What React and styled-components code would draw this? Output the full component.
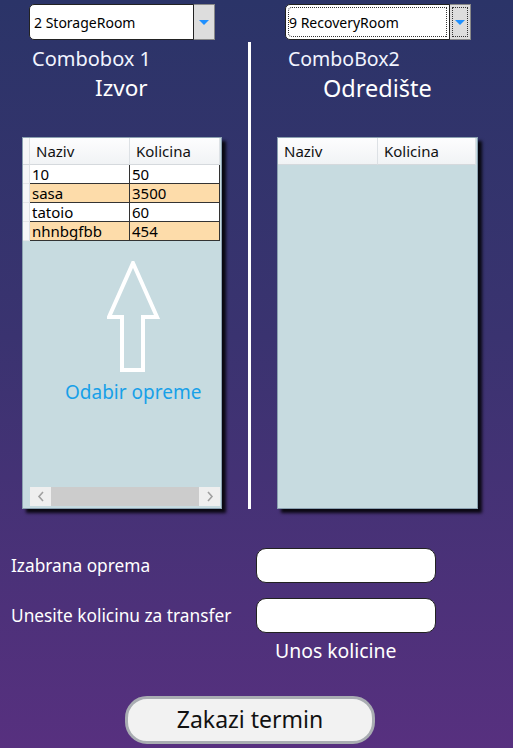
import React from "react";
import styled, { createGlobalStyle } from "styled-components";

const Global = createGlobalStyle`
  html, body { margin: 0; padding: 0; }
  body { font-family: "Noto Sans", "Open Sans", sans-serif; }
`;

const Page = styled.div`
  width: 513px;
  height: 748px;
  overflow: hidden;
  background: linear-gradient(180deg, #2b3468 0%, #3a3370 45%, #57307f 100%);
  display: flex;
  flex-direction: column;
  color: #fff;
`;

const Top = styled.div`
  display: flex;
  height: 509px;
`;

const Column = styled.div`
  width: ${(p) => p.$w}px;
  display: flex;
  flex-direction: column;
  padding-top: 4px;
  box-sizing: border-box;
`;

const Divider = styled.div`
  width: 3px;
  background: #fff;
  margin-top: 42px;
`;

const Combo = styled.div`
  display: flex;
  height: 36px;
  margin-left: ${(p) => p.$ml}px;
  width: 186px;
`;

const ComboField = styled.div`
  flex: 1;
  background: #fff;
  border: 1px solid #222;
  border-radius: 5px 0 0 5px;
  font-size: 14px;
  color: #000;
  display: flex;
  align-items: center;
  padding-left: ${(p) => (p.$focus ? 3 : 4)}px;
  position: relative;
  &::after {
    content: "";
    display: ${(p) => (p.$focus ? "block" : "none")};
    position: absolute;
    inset: 2px;
    border: 1px dotted #333;
    border-radius: 4px 0 0 4px;
  }
`;

const ComboButton = styled.div`
  width: 20px;
  background: #dddddd;
  border: 1px solid #888;
  border-left: none;
  display: flex;
  align-items: center;
  justify-content: center;
  position: relative;
  &::after {
    content: "";
    display: ${(p) => (p.$focus ? "block" : "none")};
    position: absolute;
    inset: 2px;
    border: 1px dotted #333;
  }
`;

const Caret = styled.div`
  width: 0;
  height: 0;
  border-left: 5px solid transparent;
  border-right: 5px solid transparent;
  border-top: 5px solid #1e90ff;
`;

const SmallLabel = styled.div`
  font-size: ${(p) => p.$fs}px;
  margin-left: ${(p) => p.$ml}px;
  margin-top: 6px;
  line-height: 26px;
  color: #f2f4ff;
`;

const BigLabel = styled.div`
  font-size: ${(p) => p.$fs}px;
  margin-left: ${(p) => p.$ml}px;
  line-height: 30px;
  margin-top: 1px;
`;

const Grid = styled.div`
  margin-top: 34px;
  margin-left: ${(p) => p.$ml}px;
  width: ${(p) => p.$w}px;
  flex: 1;
  background: #c7dbe0;
  border: 1px solid #8aa0b0;
  box-sizing: border-box;
  box-shadow: 4px 4px 3px rgba(0, 0, 0, 0.85);
  position: relative;
  display: flex;
  flex-direction: column;
  color: #000;
`;

const Row = styled.div`
  display: grid;
  grid-template-columns: ${(p) => (p.$rh ? "7px 100px 90px" : "100px 98px")};
  height: ${(p) => (p.$head ? 27 : 19)}px;
  font-size: 15px;
  line-height: 18px;
`;

const HeadCell = styled.div`
  background: linear-gradient(180deg, #fdfdfe 0%, #f1f3f5 100%);
  border-right: 1px solid #dde1e5;
  border-bottom: 1px solid #d5d9dd;
  padding-left: 6px;
  display: flex;
  align-items: center;
  color: #111;
`;

const RowHead = styled.div`
  background: #f6f7f8;
  border-right: 1px solid #dfe2e5;
  border-bottom: 1px solid ${(p) => (p.$head ? "#d5d9dd" : "#e4e6e8")};
`;

const Cell = styled.div`
  background: ${(p) => (p.$alt ? "#fddcaa" : "#ffffff")};
  border-right: 1px solid #333;
  border-bottom: 1px solid #333;
  padding-left: 2px;
  white-space: nowrap;
  overflow: hidden;
`;

const ScrollBar = styled.div`
  position: absolute;
  left: 7px;
  right: 1px;
  bottom: 2px;
  height: 19px;
  display: flex;
  background: #cccccc;
`;

const ScrollBtn = styled.div`
  width: 21px;
  background: #efefef;
  display: flex;
  align-items: center;
  justify-content: center;
`;

const ScrollThumb = styled.div`
  flex: 1;
`;

const ArrowSvg = styled.svg`
  position: absolute;
  left: 84px;
  top: 123px;
`;

const Hint = styled.div`
  position: absolute;
  left: 42px;
  top: 241px;
  font-size: 19px;
  color: #17a0e8;
  white-space: nowrap;
`;

const Form = styled.div`
  display: flex;
  flex-direction: column;
  padding-top: 39px;
`;

const FormRow = styled.div`
  display: flex;
  align-items: center;
  height: 35px;
  margin-bottom: 15px;
`;

const FormLabel = styled.div`
  width: 245px;
  padding-left: 11px;
  font-size: 17.3px;
  color: #fff;
`;

const TextBox = styled.div`
  width: 180px;
  height: 35px;
  box-sizing: border-box;
  background: #fff;
  border: 1px solid #222;
  border-radius: 10px;
`;

const Caption = styled.div`
  margin-left: 275px;
  margin-top: -10px;
  font-size: 19.4px;
  line-height: 26px;
`;

const ButtonRow = styled.div`
  display: flex;
  padding-left: 125px;
  margin-top: 32px;
`;

const Button = styled.button`
  width: 250px;
  height: 48px;
  box-sizing: border-box;
  background: #f2f2f2;
  border: 3px solid #a9adb2;
  border-radius: 22px;
  font-family: "Noto Sans", "Open Sans", sans-serif;
  font-size: 23px;
  color: #111;
  padding: 0 0 3px;
`;

const leftRows = [
  ["10", "50"],
  ["sasa", "3500"],
  ["tatoio", "60"],
  ["nhnbgfbb", "454"],
];

function ComboBox({ text, ml, focus }) {
  return (
    <Combo $ml={ml}>
      <ComboField $focus={focus}>{text}</ComboField>
      <ComboButton $focus={focus}>
        <Caret />
      </ComboButton>
    </Combo>
  );
}

function Chevron({ dir }) {
  return (
    <svg width="8" height="11" viewBox="0 0 8 11">
      <path
        d={dir === "left" ? "M6 1 L2 5.5 L6 10" : "M2 1 L6 5.5 L2 10"}
        fill="none"
        stroke="#a0a0a0"
        strokeWidth="1.6"
      />
    </svg>
  );
}

export default function App() {
  return (
    <>
      <Global />
      <Page>
        <Top>
          <Column $w={248}>
            <ComboBox text="2 StorageRoom" ml={29} />
            <SmallLabel $ml={32} $fs={20}>Combobox 1</SmallLabel>
            <BigLabel $ml={95} $fs={22.5}>Izvor</BigLabel>
            <Grid $ml={22} $w={200}>
              <Row $rh $head>
                <RowHead $head />
                <HeadCell>Naziv</HeadCell>
                <HeadCell>Kolicina</HeadCell>
              </Row>
              {leftRows.map(([a, b], i) => (
                <Row $rh key={i}>
                  <RowHead />
                  <Cell $alt={i % 2 === 1}>{a}</Cell>
                  <Cell $alt={i % 2 === 1}>{b}</Cell>
                </Row>
              ))}
              <ArrowSvg width="54" height="112" viewBox="0 0 54 112">
                <path
                  d="M26 2 L50 56 L36 56 L36 109 L15 109 L15 56 L2 56 Z"
                  fill="none"
                  stroke="#fff"
                  strokeWidth="4"
                  strokeLinejoin="miter"
                />
              </ArrowSvg>
              <Hint>Odabir opreme</Hint>
              <ScrollBar>
                <ScrollBtn>
                  <Chevron dir="left" />
                </ScrollBtn>
                <ScrollThumb />
                <ScrollBtn>
                  <Chevron dir="right" />
                </ScrollBtn>
              </ScrollBar>
            </Grid>
          </Column>
          <Divider />
          <Column $w={262}>
            <ComboBox text="9 RecoveryRoom" ml={34} focus />
            <SmallLabel $ml={37} $fs={19.5}>ComboBox2</SmallLabel>
            <BigLabel $ml={72} $fs={23.5}>Odredište</BigLabel>
            <Grid $ml={26} $w={201}>
              <Row $head>
                <HeadCell>Naziv</HeadCell>
                <HeadCell>Kolicina</HeadCell>
              </Row>
            </Grid>
          </Column>
        </Top>
        <Form>
          <FormRow>
            <FormLabel>Izabrana oprema</FormLabel>
            <TextBox />
          </FormRow>
          <FormRow>
            <FormLabel>Unesite kolicinu za transfer</FormLabel>
            <TextBox />
          </FormRow>
          <Caption>Unos kolicine</Caption>
        </Form>
        <ButtonRow>
          <Button>Zakazi termin</Button>
        </ButtonRow>
      </Page>
    </>
  );
}
